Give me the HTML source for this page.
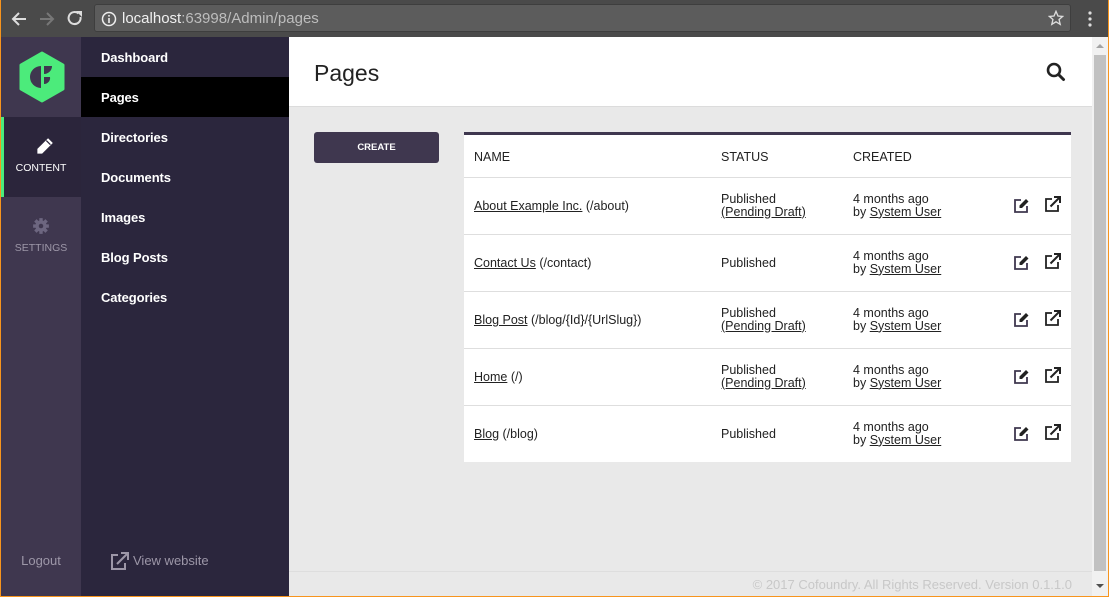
<!DOCTYPE html>
<html><head><meta charset="utf-8"><style>
*{margin:0;padding:0;box-sizing:border-box}
body{width:1109px;height:597px;overflow:hidden;font-family:"Liberation Sans",sans-serif;background:#e9e9e9;position:relative}
.abs{position:absolute}
#bar{left:0;top:0;width:1109px;height:37px;background:#4a4a4a}
#url{left:94px;top:4px;width:977px;height:28px;background:#5c5c5c;border-radius:3px;border:1px solid #3e3e3e}
#url span{position:absolute;left:27px;top:5px;font-size:15px;color:#f0f0f0}
#url span i{font-style:normal;color:#bdbdbd}
#ob{left:0;top:0;width:1109px;height:597px;border:1px solid #f7941d;border-top:none;pointer-events:none}
#ic{left:1px;top:37px;width:80px;height:560px;background:#3f374f}
#logo{left:1px;top:37px;width:80px;height:80px;background:#3f374f}
#content{left:1px;top:117px;width:80px;height:80px;background:#2b253b;border-left:3px solid #4ceb7b}
#content div{position:absolute;left:-3px;width:80px;top:45px;text-align:center;color:#fff;font-size:10.5px}
#settings div{position:absolute;width:80px;text-align:center;color:#9d97a8;font-size:10.5px}
#nav{left:81px;top:37px;width:208px;height:560px;background:#2b263d}
.ni{position:absolute;left:20px;color:#fff;font-size:13px;font-weight:bold;letter-spacing:-.1px}
#act{left:81px;top:77px;width:208px;height:40px;background:#000}
#head{left:289px;top:37px;width:803px;height:70px;background:#fff;border-bottom:1px solid #dcdcdc}
#head h1{position:absolute;left:25px;top:23px;font-size:23px;font-weight:normal;color:#222}
#sb{left:1092px;top:37px;width:16px;height:560px;background:#f1f1f1}
#thumb{left:1094px;top:55px;width:12px;height:516px;background:#c1c1c1}
#create{left:314px;top:132px;width:125px;height:31px;background:#3f374f;border-radius:3px;color:#fff;font-size:9.5px;font-weight:bold;text-align:center;line-height:31px}
#tbl{left:464px;top:132px;width:607px;height:330px;background:#fff;border-top:3px solid #3f374f}
.r{position:absolute;left:0;width:607px;border-top:1px solid #dedede;font-size:12.5px;color:#222}
.r span{position:absolute}
.r a{color:#222;text-decoration:underline}
.th{position:absolute;top:15px;font-size:12.5px;color:#222}
#foot{left:289px;top:571px;width:803px;height:26px;border-top:1px solid #dedede}
#foot div{position:absolute;right:20px;top:5px;font-size:13px;color:#c8c8c8}
</style></head><body>
<div id="bar" class="abs">
<svg class="abs" style="left:10px;top:10px" width="18" height="18" viewBox="0 0 18 18"><path d="M16 9H3M9 3L3 9l6 6" stroke="#ddd" stroke-width="2" fill="none"/></svg>
<svg class="abs" style="left:38px;top:10px" width="18" height="18" viewBox="0 0 18 18"><path d="M2 9h13M9 3l6 6-6 6" stroke="#777" stroke-width="2" fill="none"/></svg>
<svg class="abs" style="left:66px;top:9px" width="18" height="18" viewBox="0 0 18 18"><path d="M14.5 8A6 6 0 1 1 12.5 4.5" stroke="#ddd" stroke-width="2" fill="none"/><path d="M10 2h6v6z" fill="#ddd"/></svg>
</div>
<div id="url" class="abs"><svg class="abs" style="left:6px;top:6px" width="16" height="16" viewBox="0 0 16 16"><circle cx="8" cy="8" r="6.5" stroke="#eee" stroke-width="1.5" fill="none"/><rect x="7.2" y="7" width="1.6" height="5" fill="#eee"/><rect x="7.2" y="4" width="1.6" height="1.6" fill="#eee"/></svg><span>localhost<i>:63998/Admin/pages</i></span>
<svg class="abs" style="left:953px;top:5px" width="16" height="16" viewBox="0 0 24 24"><path d="M12 2l3 7 7 .6-5.4 4.7 1.7 7.2L12 17.7 5.7 21.5l1.7-7.2L2 9.6 9 9z" stroke="#ddd" stroke-width="2" fill="none"/></svg></div>
<svg class="abs" style="left:1087px;top:11px" width="6" height="16"><circle cx="3" cy="2" r="1.6" fill="#ddd"/><circle cx="3" cy="8" r="1.6" fill="#ddd"/><circle cx="3" cy="14" r="1.6" fill="#ddd"/></svg>

<div id="ic" class="abs"></div>
<div id="logo" class="abs"><svg class="abs" style="left:16px;top:14px" width="50" height="52" viewBox="0 0 50 52"><path d="M25 2l21 12v24L25 50 4 38V14z" fill="#4ceb7b" stroke="#4ceb7b" stroke-width="3" stroke-linejoin="round"/><path d="M24 15a11 11 0 0 0 0 22z" fill="#3f374f"/><path d="M27 15h8a8 8 0 0 1-8 8z" fill="#3f374f"/><path d="M27 26h6a6 6 0 0 1-6 7z" fill="#3f374f"/></svg></div>
<div id="content" class="abs"><svg class="abs" style="left:31px;top:20px" width="19" height="19" viewBox="0 0 16 16"><path d="M11 1l4 4-9 9H2v-4z" fill="#fff"/><path d="M9.5 3l3.5 3.5" stroke="#2b253b" stroke-width="1"/></svg><div>CONTENT</div></div>
<div id="settings" class="abs" style="left:1px;top:197px;width:80px;height:80px"><svg class="abs" style="left:31px;top:20px" width="18" height="18" viewBox="0 0 16 16"><circle cx="8" cy="8" r="5" fill="#6d6680"/><g stroke="#6d6680" stroke-width="3"><path d="M8 1v14M1 8h14M3 3l10 10M13 3L3 13"/></g><circle cx="8" cy="8" r="2" fill="#3f374f"/></svg><div style="top:45px">SETTINGS</div></div>
<div class="abs" style="left:1px;top:553px;width:80px;text-align:center;color:#9d97a8;font-size:13px">Logout</div>

<div id="nav" class="abs"></div>
<div id="act" class="abs"></div>
<div class="abs" style="left:81px;top:37px;width:208px">
<div class="ni" style="top:13px">Dashboard</div>
<div class="ni" style="top:53px">Pages</div>
<div class="ni" style="top:93px">Directories</div>
<div class="ni" style="top:133px">Documents</div>
<div class="ni" style="top:173px">Images</div>
<div class="ni" style="top:213px">Blog Posts</div>
<div class="ni" style="top:253px">Categories</div>
</div>
<svg class="abs" style="left:110px;top:552px" width="19" height="18" viewBox="0 0 19 18"><path d="M8 3H2v14h13v-6" stroke="#9d97a8" stroke-width="2" fill="none"/><path d="M7 12L17 2M11 1h7v7" stroke="#9d97a8" stroke-width="2" fill="none"/></svg>
<div class="abs" style="left:133px;top:553px;color:#9d97a8;font-size:13px">View website</div>

<div id="head" class="abs"><h1>Pages</h1>
<svg class="abs" style="left:757px;top:25px" width="20" height="20" viewBox="0 0 20 20"><circle cx="8" cy="8" r="6" stroke="#222" stroke-width="2.6" fill="none"/><path d="M12.5 12.5l5 5" stroke="#222" stroke-width="3" stroke-linecap="round"/></svg></div>
<div id="sb" class="abs"></div><div id="thumb" class="abs"></div>
<svg class="abs" style="left:1095px;top:42px" width="10" height="8"><path d="M1 6h8L5 2z" fill="#a3a3a3"/></svg>
<svg class="abs" style="left:1095px;top:582px" width="10" height="8"><path d="M1 2h8L5 6z" fill="#505050"/></svg>

<div id="create" class="abs">CREATE</div>

<div id="tbl" class="abs">
<div class="th" style="left:10px">NAME</div><div class="th" style="left:257px">STATUS</div><div class="th" style="left:389px">CREATED</div>
<svg width="0" height="0" style="position:absolute"><defs>
<g id="ed"><path d="M8 3H2v12h12V9" stroke="#3f374f" stroke-width="1.8" fill="none"/><path d="M13 2l2.5 2.5L9 11H6.5V8.5z" fill="#222"/></g>
<g id="ex"><path d="M8 3H2v12h12V9" stroke="#222" stroke-width="1.8" fill="none"/><path d="M6.5 10.5L15 2M10 1h6v6" stroke="#222" stroke-width="2" fill="none"/></g>
</defs></svg>

<div class="r" style="top:42px;height:57px"><span style="left:10px;top:21px"><a>About Example Inc.</a> (/about)</span><span style="left:257px;top:15px;line-height:12.5px">Published<br><a>(Pending Draft)</a></span><span style="left:389px;top:15px;line-height:12.5px">4 months ago<br>by <a>System User</a></span><svg style="position:absolute;left:549px;top:19px" width="17" height="17"><use href="#ed"/></svg><svg style="position:absolute;left:580px;top:18px" width="17" height="17"><use href="#ex"/></svg></div>
<div class="r" style="top:99px;height:57px"><span style="left:10px;top:21px"><a>Contact Us</a> (/contact)</span><span style="left:257px;top:21px">Published</span><span style="left:389px;top:15px;line-height:12.5px">4 months ago<br>by <a>System User</a></span><svg style="position:absolute;left:549px;top:19px" width="17" height="17"><use href="#ed"/></svg><svg style="position:absolute;left:580px;top:18px" width="17" height="17"><use href="#ex"/></svg></div>
<div class="r" style="top:156px;height:57px"><span style="left:10px;top:21px"><a>Blog Post</a> (/blog/{Id}/{UrlSlug})</span><span style="left:257px;top:15px;line-height:12.5px">Published<br><a>(Pending Draft)</a></span><span style="left:389px;top:15px;line-height:12.5px">4 months ago<br>by <a>System User</a></span><svg style="position:absolute;left:549px;top:19px" width="17" height="17"><use href="#ed"/></svg><svg style="position:absolute;left:580px;top:18px" width="17" height="17"><use href="#ex"/></svg></div>
<div class="r" style="top:213px;height:57px"><span style="left:10px;top:21px"><a>Home</a> (/)</span><span style="left:257px;top:15px;line-height:12.5px">Published<br><a>(Pending Draft)</a></span><span style="left:389px;top:15px;line-height:12.5px">4 months ago<br>by <a>System User</a></span><svg style="position:absolute;left:549px;top:19px" width="17" height="17"><use href="#ed"/></svg><svg style="position:absolute;left:580px;top:18px" width="17" height="17"><use href="#ex"/></svg></div>
<div class="r" style="top:270px;height:57px"><span style="left:10px;top:21px"><a>Blog</a> (/blog)</span><span style="left:257px;top:21px">Published</span><span style="left:389px;top:15px;line-height:12.5px">4 months ago<br>by <a>System User</a></span><svg style="position:absolute;left:549px;top:19px" width="17" height="17"><use href="#ed"/></svg><svg style="position:absolute;left:580px;top:18px" width="17" height="17"><use href="#ex"/></svg></div>
</div>

<div id="foot" class="abs"><div>© 2017 Cofoundry. All Rights Reserved. Version 0.1.1.0</div></div>
<div id="ob" class="abs"></div>
</body></html>
